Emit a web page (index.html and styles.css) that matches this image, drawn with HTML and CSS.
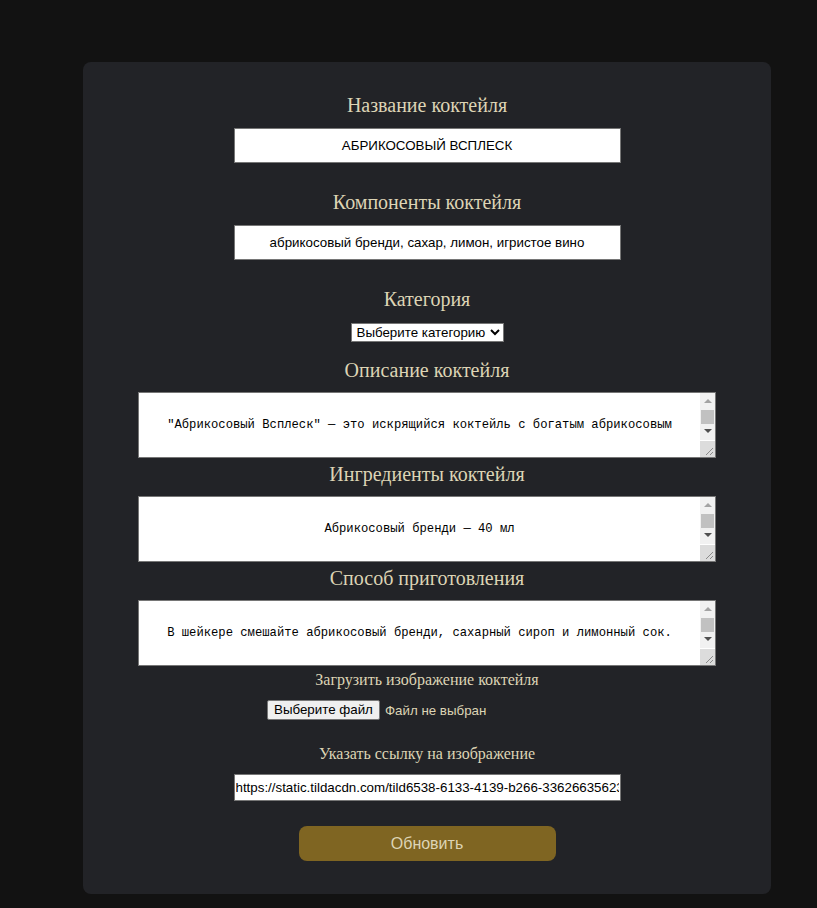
FILE: index.html
```html
<!DOCTYPE html>
<html lang="ru">
<head>
<meta charset="utf-8">
<title>Редактирование коктейля</title>
<link rel="stylesheet" href="styles.css">
</head>
<body>
<form class="card">
  <label class="lbl lbl-first">Название коктейля</label>
  <input class="txt" type="text" value="АБРИКОСОВЫЙ ВСПЛЕСК">

  <label class="lbl lbl-gap">Компоненты коктейля</label>
  <input class="txt" type="text" value="абрикосовый бренди, сахар, лимон, игристое вино">

  <label class="lbl lbl-gap lbl-cat">Категория</label>
  <select class="sel">
    <option>Выберите категорию</option>
    <option>Коктейли</option>
  </select>

  <label class="lbl lbl-sel">Описание коктейля</label>
  <div class="area-wrap">
    <textarea class="area">"Абрикосовый Всплеск" — это искрящийся коктейль с богатым абрикосовым
вкусом, свежестью лимона и лёгкими пузырьками игристого вина.</textarea>
    <div class="sbar" aria-hidden="true">
      <span class="arrow-up"></span>
      <span class="thumb"></span>
      <span class="arrow-down"></span>
    </div>
    <div class="grip" aria-hidden="true">
      <svg width="15" height="16" viewBox="0 0 15 16"><path d="M13 7 L6 14 M13 11 L10 14" stroke="#8a8a8a" stroke-width="1" fill="none"/></svg>
    </div>
  </div>

  <label class="lbl lbl-area">Ингредиенты коктейля</label>
  <div class="area-wrap">
    <textarea class="area">Абрикосовый бренди — 40 мл
Сахарный сироп — 15 мл
Лимонный сок — 15 мл
Игристое вино — 60 мл</textarea>
    <div class="sbar" aria-hidden="true">
      <span class="arrow-up"></span>
      <span class="thumb"></span>
      <span class="arrow-down"></span>
    </div>
    <div class="grip" aria-hidden="true">
      <svg width="15" height="16" viewBox="0 0 15 16"><path d="M13 7 L6 14 M13 11 L10 14" stroke="#8a8a8a" stroke-width="1" fill="none"/></svg>
    </div>
  </div>

  <label class="lbl lbl-area">Способ приготовления</label>
  <div class="area-wrap">
    <textarea class="area">В шейкере смешайте абрикосовый бренди, сахарный сироп и лимонный сок.
Добавьте лёд и хорошо встряхните. Процедите в бокал и долейте игристое вино.</textarea>
    <div class="sbar" aria-hidden="true">
      <span class="arrow-up"></span>
      <span class="thumb"></span>
      <span class="arrow-down"></span>
    </div>
    <div class="grip" aria-hidden="true">
      <svg width="15" height="16" viewBox="0 0 15 16"><path d="M13 7 L6 14 M13 11 L10 14" stroke="#8a8a8a" stroke-width="1" fill="none"/></svg>
    </div>
  </div>

  <label class="lbl-small lbl-upload">Загрузить изображение коктейля</label>
  <div class="file">
    <label class="file-btn" for="file">Выберите файл</label>
    <span class="file-name">Файл не выбран</span>
    <input id="file" class="file-input" type="file">
  </div>

  <label class="lbl-small lbl-link">Указать ссылку на изображение</label>
  <input class="link" type="text" value="https://static.tildacdn.com/tild6538-6133-4139-b266-336266356233/photo.jpg">

  <button class="submit" type="button">Обновить</button>
</form>
</body>
</html>
```

FILE: styles.css
```css
html, body {
  margin: 0;
  padding: 0;
}

body {
  background: #121212;
  min-height: 908px;
  overflow: hidden;
}

.card {
  width: 688px;
  margin: 62px 0 0 83px;
  padding: 32px 0 33px;
  box-sizing: border-box;
  background: #222327;
  border-radius: 8px;
  display: flex;
  flex-direction: column;
  align-items: center;
}

.lbl {
  font-family: "Liberation Serif", "Times New Roman", serif;
  font-size: 20px;
  line-height: 22px;
  color: #ddd4b5;
  margin-bottom: 12px;
}

.lbl-gap { margin-top: 28px; }
.lbl-cat { margin-bottom: 13px; }
.lbl-sel { margin-top: 17px; margin-bottom: 11px; }
.lbl-area { margin-top: 5px; margin-bottom: 11px; }

.lbl-small {
  font-family: "Liberation Serif", "Times New Roman", serif;
  font-size: 16px;
  line-height: 19px;
  color: #ddd4b5;
}

.lbl-upload { margin-top: 4px; margin-bottom: 11px; }
.lbl-link { margin-top: 24px; margin-bottom: 11px; }

.txt {
  width: 387px;
  height: 35px;
  box-sizing: border-box;
  border: 1px solid #767676;
  background: #fff;
  color: #000;
  font-family: "Liberation Sans", Arial, sans-serif;
  font-size: 13.33px;
  text-align: center;
  padding: 0 8px;
  margin: 0;
}

.sel {
  height: 19px;
  box-sizing: border-box;
  font-family: "Liberation Sans", Arial, sans-serif;
  font-size: 13.33px;
  color: #000;
  background: #fff;
  border: 1px solid #767676;
  border-radius: 0;
  padding: 0 1px;
  margin: 0;
}

.area-wrap {
  position: relative;
  width: 578px;
  height: 66px;
}

.area {
  display: block;
  width: 100%;
  height: 100%;
  box-sizing: border-box;
  border: 1px solid #767676;
  background: #fff;
  color: #000;
  font-family: "Liberation Mono", "DejaVu Sans Mono", monospace;
  font-size: 12.2px;
  line-height: 40px;
  text-align: center;
  padding: 12px 35px 12px 20px;
  margin: 0;
  overflow: hidden;
  resize: none;
  white-space: pre;
}

.sbar {
  position: absolute;
  top: 1px;
  right: 1px;
  width: 15px;
  height: 47px;
  background: #f1f1f1;
}

.arrow-up {
  position: absolute;
  left: 4px;
  top: 6px;
  width: 0;
  height: 0;
  border-left: 4px solid transparent;
  border-right: 4px solid transparent;
  border-bottom: 4px solid #a3a3a3;
}

.arrow-down {
  position: absolute;
  left: 4px;
  top: 36px;
  width: 0;
  height: 0;
  border-left: 4px solid transparent;
  border-right: 4px solid transparent;
  border-top: 4px solid #505050;
}

.thumb {
  position: absolute;
  left: 1px;
  top: 17px;
  width: 13px;
  height: 14px;
  background: #c1c1c1;
}

.grip {
  position: absolute;
  right: 1px;
  bottom: 1px;
  width: 15px;
  height: 16px;
  background: #dcdcdc;
}

.grip svg {
  display: block;
}

.file {
  display: flex;
  align-items: center;
  width: 320px;
  height: 20px;
  gap: 5px;
}

.file-btn {
  height: 20px;
  box-sizing: border-box;
  padding: 1px 6px;
  background: #efefef;
  border: 1px solid #767676;
  border-radius: 2px;
  font-family: "Liberation Sans", Arial, sans-serif;
  font-size: 13.33px;
  line-height: 16px;
  color: #000;
}

.file-name {
  font-family: "Liberation Sans", Arial, sans-serif;
  font-size: 13.33px;
  color: #ddd4b5;
}

.file-input {
  display: none;
}

.link {
  width: 387px;
  height: 27px;
  box-sizing: border-box;
  border: 1px solid #767676;
  background: #fff;
  color: #000;
  font-family: "Liberation Sans", Arial, sans-serif;
  font-size: 13.33px;
  padding: 0 1px;
  margin: 0;
}

.submit {
  margin-top: 25px;
  width: 257px;
  height: 35px;
  border: none;
  border-radius: 8px;
  background: #7f6522;
  color: #ddd4b5;
  font-family: "Liberation Sans", Arial, sans-serif;
  font-size: 16px;
}
```
